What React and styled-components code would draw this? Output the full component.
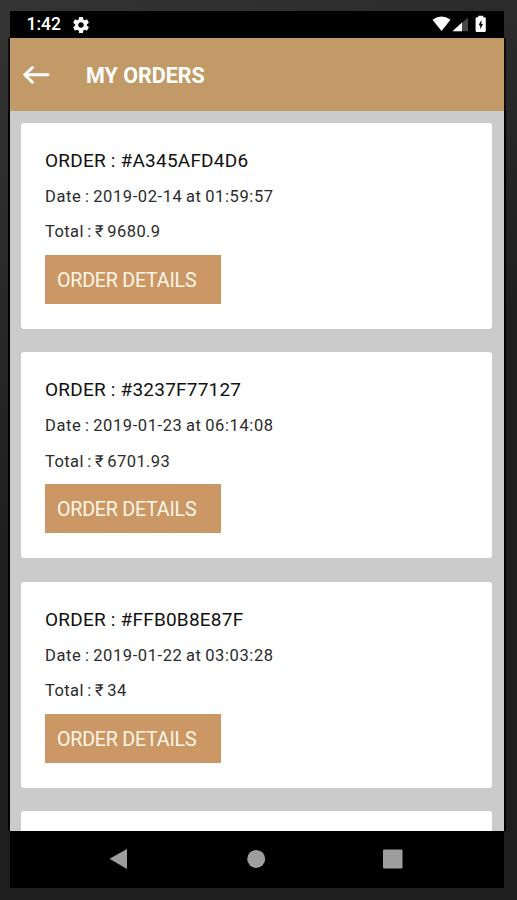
import React, { memo } from "react";
import styled, { createGlobalStyle } from "styled-components";

const GlobalStyle = createGlobalStyle`
  * {
    box-sizing: border-box;
  }

  body {
    margin: 0;
    font-family: Roboto, "Liberation Sans", sans-serif;
  }
`;

const Device = styled.div`
  display: flex;
  flex-direction: column;
  width: 517px;
  height: 900px;
  padding: 11px 13px 12px 10px;
  overflow: hidden;
  background: linear-gradient(155deg, #343434 0%, #2b2b2b 22%, #1e1e1e 50%, #1e1e1e 100%);
`;

const StatusBar = styled.div`
  display: flex;
  justify-content: space-between;
  flex: 0 0 27px;
  padding: 0 17px 0 16.5px;
  background: #000;
  color: #fff;
`;

const StatusGroup = styled.div`
  display: flex;
  align-items: center;
`;

const Clock = styled.span`
  width: 46.5px;
  font-size: 17.5px;
  font-weight: 500;
  line-height: 27px;
`;

const Header = styled.header`
  display: flex;
  align-items: center;
  flex: 0 0 73px;
  padding-left: 12px;
  background: #c19a67;
  box-shadow: -2px 0 0 #0c0c0c, 2px 0 0 #0c0c0c;
  color: #fff;
`;

const Title = styled.h1`
  margin: 2px 0 0 36px;
  font-size: 21.5px;
  font-weight: 700;
  line-height: 28px;
`;

const OrderList = styled.main`
  display: flex;
  flex-direction: column;
  gap: 23.5px;
  flex: 1;
  min-height: 0;
  padding: 11.7px 12px 0 11px;
  overflow: hidden;
  background: #cbcbcb;
  box-shadow: -2px 0 0 #000, 2px 0 0 #000;
`;

const Card = styled.article`
  flex: 0 0 206px;
  padding: 23px 24px 0;
  border-radius: 3px;
  background: #fff;
`;

const OrderNumber = styled.h2`
  margin: 0 0 3px;
  color: #111;
  font-size: 19px;
  font-weight: 400;
  line-height: 30px;
  letter-spacing: 0.22px;
`;

const Detail = styled.p`
  margin: 0;
  color: #2b2b2b;
  font-size: 16.5px;
  line-height: 35.5px;
  letter-spacing: ${(props) => props.$tracking}px;
  word-spacing: -1.1px;
`;

const DetailsButton = styled.button`
  display: block;
  width: 176px;
  height: 49.3px;
  margin-top: 5px;
  padding: 2px 0 0 12px;
  border: 0;
  background: #cb9865;
  color: #fff5e8;
  font-family: inherit;
  font-size: 19.7px;
  letter-spacing: -0.25px;
  text-align: left;
`;

const NavBar = styled.nav`
  display: flex;
  align-items: center;
  flex: 0 0 57px;
  padding-bottom: 2px;
  background: #000;
`;

const NavIcon = styled.svg`
  flex: none;
  width: 20px;
  height: 22px;
  margin-left: ${(props) => props.$gap}px;
  fill: #9e9e9e;
`;

const orders = [
  { id: "#A345AFD4D6", date: "2019-02-14 at 01:59:57", total: "9680.9" },
  { id: "#3237F77127", date: "2019-01-23 at 06:14:08", total: "6701.93" },
  { id: "#FFB0B8E87F", date: "2019-01-22 at 03:03:28", total: "34" },
];

const GearIcon = () => (
  <svg width="16" height="16" viewBox="2 2 20 20" fill="currentColor">
    <path d="M19.43 12.98c.04-.32.07-.64.07-.98s-.03-.66-.07-.98l2.11-1.65c.19-.15.24-.42.12-.64l-2-3.46c-.12-.22-.39-.3-.61-.22l-2.49 1c-.52-.4-1.08-.73-1.69-.98l-.38-2.65C14.46 2.18 14.25 2 14 2h-4c-.25 0-.46.18-.49.42l-.38 2.65c-.61.25-1.17.59-1.69.98l-2.49-1c-.23-.09-.49 0-.61.22l-2 3.46c-.13.22-.07.49.12.64l2.11 1.65c-.04.32-.07.65-.07.98s.03.66.07.98l-2.11 1.65c-.19.15-.24.42-.12.64l2 3.46c.12.22.39.3.61.22l2.49-1c.52.4 1.08.73 1.69.98l.38 2.65c.03.24.24.42.49.42h4c.25 0 .46-.18.49-.42l.38-2.65c.61-.25 1.17-.59 1.69-.98l2.49 1c.23.09.49 0 .61-.22l2-3.46c.12-.22.07-.49-.12-.64l-2.11-1.65zM12 15.5c-1.93 0-3.5-1.57-3.5-3.5s1.57-3.5 3.5-3.5 3.5 1.57 3.5 3.5-1.57 3.5-3.5 3.5z" />
  </svg>
);

const StatusIcons = () => (
  <svg width="56" height="20" viewBox="0 0 56 20">
    <path d="M1.5 4.8Q10.5-1.6 19.5 4.8L10.5 16Z" fill="#fff" />
    <path d="M21.5 16.3L37 2.5v13.8Z" fill="#484848" />
    <path d="M21.5 16.3L31 7.6v8.7Z" fill="#fff" />
    <path d="M47.2 2.3V.8h5v1.5h1.4q1.2 0 1.2 1.2v12.3q0 1.2-1.2 1.2h-7.8q-1.2 0-1.2-1.2V3.5q0-1.2 1.2-1.2Z" fill="#fff" />
    <path d="M50.4 4.9L47.6 10.2h1.6v4.1l2.8-5.4h-1.6Z" fill="#000" />
  </svg>
);

const BackIcon = () => (
  <svg width="28" height="20" viewBox="0 0 28 20" fill="none" stroke="#fff">
    <path
      d="M10.5 2.5L2.7 9.8L10.5 17.2M2.7 9.8H26"
      strokeWidth="2.9"
      strokeLinecap="round"
      strokeLinejoin="round"
    />
  </svg>
);

const OrderCard = ({ order }) => (
  <Card>
    <OrderNumber>ORDER : {order.id}</OrderNumber>
    <Detail $tracking={0.6}>Date : {order.date}</Detail>
    <Detail $tracking={0.4}>Total : ₹ {order.total}</Detail>
    <DetailsButton type="button">ORDER DETAILS</DetailsButton>
  </Card>
);

const App = () => {
  return (
    <>
      <GlobalStyle />
      <Device>
        <StatusBar>
          <StatusGroup>
            <Clock>1:42</Clock>
            <GearIcon />
          </StatusGroup>
          <StatusGroup>
            <StatusIcons />
          </StatusGroup>
        </StatusBar>
        <Header>
          <BackIcon />
          <Title>MY ORDERS</Title>
        </Header>
        <OrderList>
          {orders.map((order) => (
            <OrderCard order={order} key={order.id} />
          ))}
          <Card />
        </OrderList>
        <NavBar>
          <NavIcon $gap={98} viewBox="0 0 20 22">
            <path d="M1.5 10.7L19 1v20Z" />
          </NavIcon>
          <NavIcon $gap={118} viewBox="0 0 20 22">
            <circle cx="10.2" cy="10.9" r="9" />
          </NavIcon>
          <NavIcon $gap={117} viewBox="0 0 20 22">
            <rect x="0" y="1.5" width="19.5" height="19" rx="1" />
          </NavIcon>
        </NavBar>
      </Device>
    </>
  );
};

export default memo(App);
